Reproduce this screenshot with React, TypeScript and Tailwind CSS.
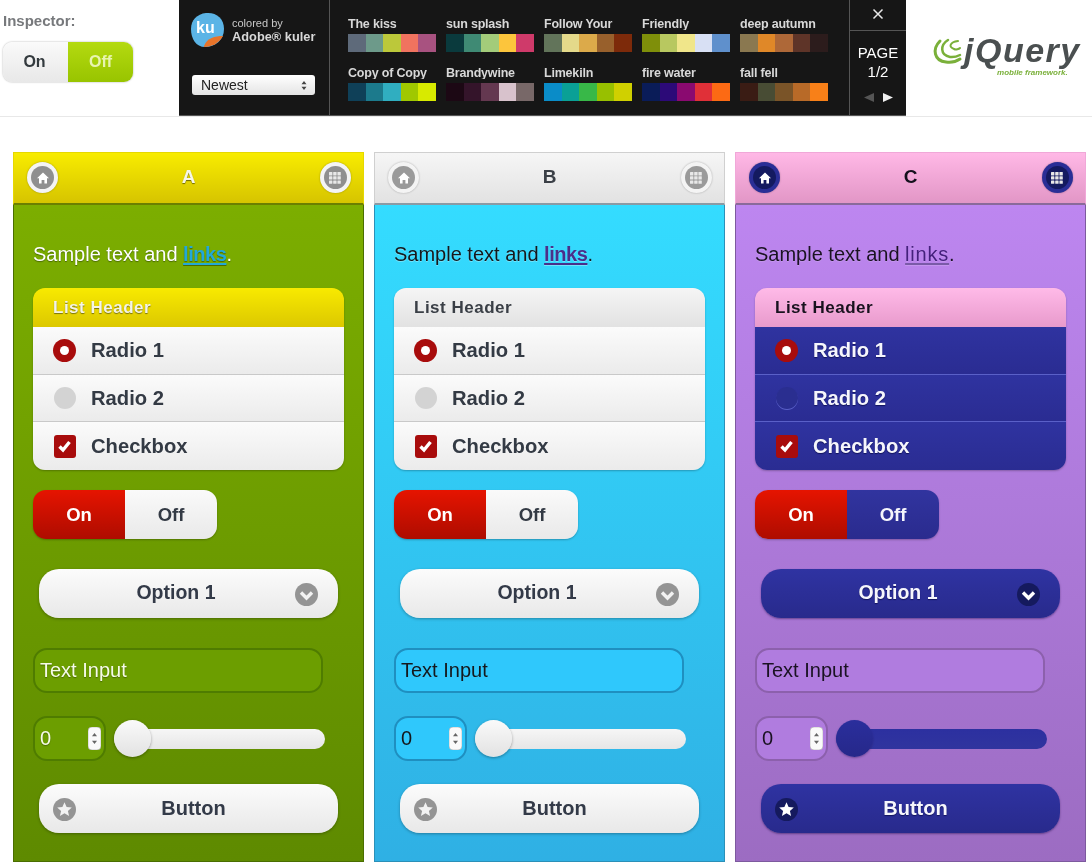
import React from "react";

type Theme = {
  title: string;
  bar: string;
  titleText: string;
  navOuter: string;
  navInner: string;
  body: string;
  sample: string;
  link: string;
  listHead: string;
  listHeadText: string;
  row: string;
  rowText: string;
  rowLine: string;
  radioOff: string;
  off: string;
  offText: string;
  pill: string;
  pillText: string;
  iconBg: string;
  iconInk: string;
  field: string;
  fieldText: string;
  track: string;
  thumb: string;
};

const themes: Theme[] = [
  {
    title: "A",
    bar: "bg-gradient-to-b from-[#f8ec00] to-[#d6c400] border-[#e6d800] border-b-[#6b7f00]",
    titleText: "text-[#f7f7e8] [text-shadow:0_1px_1px_#6e6a00]",
    navOuter: "bg-[#f4f4f4]",
    navInner: "bg-[#8f8f8f]",
    body: "bg-gradient-to-b from-[#7cae00] to-[#5e8a00] border-[#4a6e00]",
    sample: "text-white [text-shadow:0_1px_1px_#4a6a00]",
    link: "font-bold tracking-[-0.45px] text-[#22a8d8] decoration-[#22a8d8]",
    listHead: "bg-gradient-to-b from-[#f8ea00] to-[#dcc800]",
    listHeadText: "text-[#f4f4e6] [text-shadow:0_1px_1px_#77700a]",
    row: "bg-gradient-to-b from-[#fbfbfb] to-[#ebebeb]",
    rowText: "text-[#333a44]",
    rowLine: "border-[#c9c9c9]",
    radioOff: "bg-[#d3d3d3]",
    off: "bg-gradient-to-b from-[#fafafa] to-[#e9e9e9]",
    offText: "text-[#333a44]",
    pill: "bg-gradient-to-b from-[#fcfcfc] to-[#e8e8e8] shadow-[0_1px_3px_rgba(0,0,0,0.3)]",
    pillText: "text-[#333a48]",
    iconBg: "#949494",
    iconInk: "#f2f2f2",
    field: "bg-[#6c9e00] border-[#4f7c00]",
    fieldText: "text-[#f6fbe8] [text-shadow:0_1px_1px_#4a6a00]",
    track: "bg-gradient-to-b from-[#f6f6f6] to-[#e6e6e6]",
    thumb: "bg-gradient-to-b from-[#fafafa] to-[#e2e2e2] shadow-[0_1px_3px_rgba(0,0,0,0.35)]",
  },
  {
    title: "B",
    bar: "bg-gradient-to-b from-[#f6f6f6] to-[#e2e2e2] border-[#d0d0d0] border-b-[#8a9aa4]",
    titleText: "text-[#3a3f46]",
    navOuter: "bg-[#f4f4f4]",
    navInner: "bg-[#9a9a9a]",
    body: "bg-gradient-to-b from-[#34dcff] to-[#2fb0e4] border-[#2b90b8]",
    sample: "text-[#15181c] [text-shadow:0_1px_0_rgba(255,255,255,0.3)]",
    link: "font-bold tracking-[-0.45px] text-[#4a2f8a] decoration-[#4a2f8a]",
    listHead: "bg-gradient-to-b from-[#f5f5f5] to-[#e2e2e2]",
    listHeadText: "text-[#3a3f46]",
    row: "bg-gradient-to-b from-[#fbfbfb] to-[#ebebeb]",
    rowText: "text-[#333a44]",
    rowLine: "border-[#c9c9c9]",
    radioOff: "bg-[#d3d3d3]",
    off: "bg-gradient-to-b from-[#fafafa] to-[#e9e9e9]",
    offText: "text-[#333a44]",
    pill: "bg-gradient-to-b from-[#fcfcfc] to-[#e8e8e8] shadow-[0_1px_3px_rgba(0,0,0,0.3)]",
    pillText: "text-[#333a48]",
    iconBg: "#949494",
    iconInk: "#f2f2f2",
    field: "bg-[#2fc8fc] border-[#1f8fc0]",
    fieldText: "text-[#15181c]",
    track: "bg-gradient-to-b from-[#f6f6f6] to-[#e6e6e6]",
    thumb: "bg-gradient-to-b from-[#fafafa] to-[#e2e2e2] shadow-[0_1px_3px_rgba(0,0,0,0.35)]",
  },
  {
    title: "C",
    bar: "bg-gradient-to-b from-[#ffb8e6] to-[#e296c6] border-[#f0a8d8] border-b-[#8a6a9a]",
    titleText: "text-[#14101c]",
    navOuter: "bg-[#2a2e96]",
    navInner: "bg-[#141a60]",
    body: "bg-gradient-to-b from-[#bd86f0] to-[#9c6cc2] border-[#7d5a9e]",
    sample: "text-[#1a1222] [text-shadow:0_1px_0_rgba(255,255,255,0.15)]",
    link: "tracking-[0.8px] text-[#44207c] decoration-[#7a5aa8]",
    listHead: "bg-gradient-to-b from-[#ffbae8] to-[#e89acc]",
    listHeadText: "text-[#18121e]",
    row: "bg-gradient-to-b from-[#2f33a0] to-[#2a2c92]",
    rowText: "text-[#f6f6fc] [text-shadow:0_1px_1px_#12145c]",
    rowLine: "border-[#5a60c8]",
    radioOff: "bg-[#2a2e90] shadow-[0_1px_0_#5a60c8]",
    off: "bg-gradient-to-b from-[#31349f] to-[#2a2b8e]",
    offText: "text-[#f6f6fc]",
    pill: "bg-gradient-to-b from-[#2f33a2] to-[#282a8c] shadow-[0_1px_2px_rgba(40,20,80,0.5)]",
    pillText: "text-[#f6f6fc] [text-shadow:0_1px_1px_#12145c]",
    iconBg: "#151a5e",
    iconInk: "#ffffff",
    field: "bg-[#b07cdf] border-[#8c60ac]",
    fieldText: "text-[#1a1222]",
    track: "bg-gradient-to-b from-[#2c30a0] to-[#30349e]",
    thumb: "bg-gradient-to-b from-[#2a2e9c] to-[#26288a] shadow-[0_1px_2px_rgba(40,20,80,0.4)]",
  },
];

const palettes: { name: string; colors: string[] }[] = [
  { name: "The kiss", colors: ["#5e6a7a", "#6d9a8a", "#bcc83a", "#f0735f", "#a85280"] },
  { name: "sun splash", colors: ["#0a3a3d", "#3f8a74", "#a3cc7a", "#fcc53c", "#cf3a6a"] },
  { name: "Follow Your", colors: ["#62745a", "#e4d98a", "#dcaa4a", "#98602c", "#7d2a0a"] },
  { name: "Friendly", colors: ["#7f8f0a", "#b8c860", "#f0e68a", "#d8e0f4", "#5f90cc"] },
  { name: "deep autumn", colors: ["#8a7850", "#e08828", "#ae6838", "#5e3428", "#2c1c1c"] },
  { name: "Copy of Copy", colors: ["#0f4058", "#1c7a8c", "#30aec0", "#a0c800", "#d8ea00"] },
  { name: "Brandywine", colors: ["#1c0814", "#34142a", "#643850", "#d8c2cc", "#786868"] },
  { name: "Limekiln", colors: ["#0a8cc8", "#0aa096", "#38b848", "#98c000", "#d0d000"] },
  { name: "fire water", colors: ["#0a1c58", "#2c0a78", "#8a0a70", "#e03038", "#fc6a14"] },
  { name: "fall fell", colors: ["#3a1c14", "#484c34", "#7a5428", "#b86a28", "#f88018"] },
];

const font = "font-['Liberation_Sans',Arial,sans-serif]";

function NavButton({ t, kind }: { t: Theme; kind: "home" | "grid" }) {
  return (
    <div className={`w-[31px] h-[31px] rounded-full flex items-center justify-center shadow-[0_0_2px_rgba(0,0,0,0.3)] ${t.navOuter}`}>
      <div className={`w-[23px] h-[23px] rounded-full flex items-center justify-center ${t.navInner}`}>
        {kind === "home" ? (
          <svg width="14" height="14" viewBox="0 0 14 14">
            <path d="M7 1.5 L13 7.2 H11 V12.5 H8.4 V9 H5.6 V12.5 H3 V7.2 H1 Z" fill="#fff" />
          </svg>
        ) : (
          <svg width="14" height="14" viewBox="0 0 14 14" fill="#e8e8e8">
            {[1, 5.2, 9.4].map((y) =>
              [1, 5.2, 9.4].map((x) => <rect key={`${x}-${y}`} x={x} y={y} width="3.4" height="3.4" rx="0.5" />)
            )}
          </svg>
        )}
      </div>
    </div>
  );
}

function Row({ t, label, kind, last }: { t: Theme; label: string; kind: "on" | "off" | "check"; last?: boolean }) {
  return (
    <div className={`h-[48px] flex items-center pl-[20px] ${t.row} ${last ? "" : `border-b ${t.rowLine}`}`}>
      <div className="w-[23px] h-[23px] flex items-center justify-center mr-[15px]">
        {kind === "on" && (
          <div className="w-[23px] h-[23px] rounded-full bg-[#a80c0c] flex items-center justify-center">
            <div className="w-[9px] h-[9px] rounded-full bg-white" />
          </div>
        )}
        {kind === "off" && <div className={`w-[22px] h-[22px] rounded-full ${t.radioOff}`} />}
        {kind === "check" && (
          <div className="w-[22px] h-[23px] rounded-[3px] bg-[#a80c0c] flex items-center justify-center">
            <svg width="15" height="14" viewBox="0 0 15 14">
              <path d="M2.5 7.5 L6 11 L12.5 3" fill="none" stroke="#fff" strokeWidth="3.4" />
            </svg>
          </div>
        )}
      </div>
      <span className={`text-[20.2px] font-bold ${t.rowText}`}>{label}</span>
    </div>
  );
}

function Panel({ t }: { t: Theme }) {
  return (
    <div className="w-[351px] h-[710px] flex flex-col">
      <div className={`h-[53px] flex items-center justify-between pl-[13px] pr-[12px] pb-[1px] border border-b-2 ${t.bar}`}>
        <NavButton t={t} kind="home" />
        <span className={`text-[19px] font-bold pb-[1px] pr-[1px] ${t.titleText}`}>{t.title}</span>
        <NavButton t={t} kind="grid" />
      </div>
      <div className={`flex-1 flex flex-col border border-t-0 px-[19px] ${t.body}`}>
        <p className={`mt-[35px] h-[28px] leading-[28px] text-[20px] ${t.sample}`}>
          Sample text and <span className={`underline underline-offset-2 ${t.link}`}>links</span>.
        </p>
        <div className="mt-[20px] w-[311px] h-[182px] rounded-[12px] overflow-hidden shadow-[0_1px_2px_rgba(0,0,0,0.25)] flex flex-col">
          <div className={`h-[39px] flex items-center pl-[20px] ${t.listHead}`}>
            <span className={`text-[17px] font-bold tracking-[0.5px] ${t.listHeadText}`}>List Header</span>
          </div>
          <Row t={t} label="Radio 1" kind="on" />
          <Row t={t} label="Radio 2" kind="off" />
          <Row t={t} label="Checkbox" kind="check" last />
        </div>
        <div className="mt-[20px] w-[184px] h-[49px] rounded-[13px] overflow-hidden flex shadow-[0_1px_2px_rgba(0,0,0,0.25)]">
          <div className="w-[92px] flex items-center justify-center bg-gradient-to-b from-[#e61400] to-[#ae0c00] text-white text-[18.5px] font-bold">
            On
          </div>
          <div className={`flex-1 flex items-center justify-center text-[18.5px] font-bold ${t.off} ${t.offText}`}>Off</div>
        </div>
        <div className={`mt-[30px] ml-[6px] w-[299px] h-[49px] rounded-[20px] relative flex items-center justify-center pr-[25px] pb-[1px] ${t.pill}`}>
          <span className={`text-[19.5px] font-bold ${t.pillText}`}>Option 1</span>
          <svg className="absolute right-[20px] top-[14px]" width="23" height="23" viewBox="0 0 23 23">
            <circle cx="11.5" cy="11.5" r="11.5" fill={t.iconBg} />
            <path d="M6 9.5 L11.5 15 L17 9.5" fill="none" stroke={t.iconInk} strokeWidth="3.4" />
          </svg>
        </div>
        <div className={`mt-[30px] w-[290px] h-[45px] rounded-[14px] border-2 flex items-center pl-[5px] pb-[2px] ${t.field}`}>
          <span className={`text-[20px] ${t.fieldText}`}>Text Input</span>
        </div>
        <div className="mt-[23px] h-[45px] flex items-center">
          <div className={`w-[73px] h-[45px] rounded-[14px] border-2 flex items-center justify-between pl-[5px] pr-[3px] ${t.field}`}>
            <span className={`text-[20px] pb-[2px] ${t.fieldText}`}>0</span>
            <svg width="13" height="23" viewBox="0 0 13 23">
              <rect width="13" height="23" rx="4" fill="#fafafa" stroke="#999" strokeWidth="0.5" />
              <path d="M6.5 6 L9 9.2 H4 Z" fill="#666" />
              <path d="M6.5 17 L9 13.8 H4 Z" fill="#666" />
            </svg>
          </div>
          <div className="relative ml-[8px] w-[211px] h-[20px]">
            <div className={`h-[20px] rounded-[10px] ${t.track}`} />
            <div className={`absolute left-0 top-[-9px] w-[37px] h-[37px] rounded-full ${t.thumb}`} />
          </div>
        </div>
        <div className={`mt-[23px] ml-[6px] w-[299px] h-[49px] rounded-[20px] relative flex items-center justify-center pl-[10px] pb-[2px] ${t.pill}`}>
          <span className={`text-[20px] font-bold ${t.pillText}`}>Button</span>
          <svg className="absolute left-[14px] top-[14px]" width="23" height="23" viewBox="0 0 23 23">
            <circle cx="11.5" cy="11.5" r="11.5" fill={t.iconBg} />
            <path d="M11.5 4.2 L13.6 9 L18.8 9.5 L14.9 12.9 L16.1 18 L11.5 15.3 L6.9 18 L8.1 12.9 L4.2 9.5 L9.4 9 Z" fill={t.iconInk} />
          </svg>
        </div>
      </div>
    </div>
  );
}

function Kuler() {
  return (
    <div className="w-[727px] h-[116px] bg-[#161616] flex text-white border-b border-[#555]">
      <div className="w-[151px] pl-[12px] border-r border-[#555] flex flex-col">
        <div className="mt-[12px] flex items-center">
          <svg width="34" height="36" viewBox="0 0 34 36">
            <path d="M15 1 C25 0 33 6 33 17 C33 28 24 35 14 35 C5 35 0 27 0 17 C0 8 6 2 15 1 Z" fill="#5bb4e6" />
            <path d="M13 34 C16 26 24 24 32 24 C28 31 21 35 13 35 Z" fill="#e8742a" />
            <text x="5" y="21" fontSize="16" fontWeight="700" fill="#fff" fontFamily="Liberation Sans, sans-serif">ku</text>
          </svg>
          <div className="ml-[7px] flex flex-col">
            <span className="text-[11px] leading-[12px] text-[#c8c8c8]">colored by</span>
            <span className="text-[12.8px] leading-[15px] font-bold text-[#d8d8d8]">Adobe® kuler</span>
          </div>
        </div>
        <div className="mt-[27px] ml-[1px] w-[123px] h-[20px] rounded-[3px] bg-gradient-to-b from-[#ffffff] to-[#e4e4e4] flex items-center justify-between pl-[9px] pr-[8px]">
          <span className="text-[14px] text-[#222]">Newest</span>
          <svg width="6" height="11" viewBox="0 0 6 11">
            <path d="M3 1 L5.5 4.2 H0.5 Z M3 10 L5.5 6.8 H0.5 Z" fill="#444" />
          </svg>
        </div>
      </div>
      <div className="w-[519px] pl-[18px] pt-[17px] grid grid-cols-[repeat(5,98px)] grid-rows-[49px_49px] content-start">
        {palettes.map((p) => (
          <div key={p.name} className="flex flex-col">
            <div className="h-[13px] overflow-hidden text-[12.5px] leading-[15px] font-bold tracking-[-0.2px] text-[#d8d8d8]">{p.name}</div>
            <div className="mt-[4px] w-[88px] h-[18px] flex">
              {p.colors.map((c, i) => (
                <div key={i} className="flex-1" style={{ background: c }} />
              ))}
            </div>
          </div>
        ))}
      </div>
      <div className="flex-1 border-l border-[#555] flex flex-col items-center">
        <div className="w-full h-[31px] border-b border-[#555] flex items-center justify-center pb-[3px]">
          <svg width="12" height="12" viewBox="0 0 12 12">
            <path d="M1.5 1.5 L10.5 10.5 M10.5 1.5 L1.5 10.5" stroke="#e8e8e8" strokeWidth="1.5" />
          </svg>
        </div>
        <div className="mt-[12px] text-[15px] leading-[19px] text-center text-white">
          PAGE
          <br />
          1/2
        </div>
        <div className="mt-[12px] flex items-center gap-[9px]">
          <svg width="10" height="9" viewBox="0 0 10 9"><path d="M0 4.5 L10 0 V9 Z" fill="#555" /></svg>
          <svg width="10" height="9" viewBox="0 0 10 9"><path d="M10 4.5 L0 0 V9 Z" fill="#f0f0f0" /></svg>
        </div>
      </div>
    </div>
  );
}

function JQueryLogo() {
  return (
    <div className="flex-1 h-[116px] flex items-start pt-[35px] pl-[26px]">
      <svg width="32" height="30" viewBox="0 0 32 30" className="mt-[2px] shrink-0">
        <g fill="none" stroke="#7ab03a" strokeLinecap="round">
          <path d="M8 4 C0 12 2 24 14 25 C20 26 25 24 28 22" strokeWidth="3" />
          <path d="M16 3 C8 8 8 18 18 20 C22 20.5 26 19 28 18" strokeWidth="2.5" />
          <path d="M26 4 C18 5 16 10 22 12 C24 13 27 12 28 11" strokeWidth="2" />
        </g>
      </svg>
      <div className="flex flex-col">
        <span className="h-[30px] text-[34px] leading-[30px] font-bold italic text-[#4a4f50] tracking-[1.5px]">jQuery</span>
        <span className="text-[8px] leading-[8px] font-bold italic text-[#7ab03a] self-end mr-[13px] mt-[4px]">mobile framework.</span>
      </div>
    </div>
  );
}

export default function App() {
  return (
    <div className={`w-[1092px] h-[866px] bg-white overflow-hidden blur-[0.4px] ${font}`}>
      <div className="h-[117px] flex border-b border-[#e8e8e8]">
        <div className="w-[179px] pl-[3px] pt-[12px]">
          <div className="text-[15px] leading-[17px] font-bold text-[#77797c]">Inspector:</div>
          <div className="mt-[13px] w-[130px] h-[40px] rounded-[9px] overflow-hidden flex shadow-[0_0_2px_rgba(0,0,0,0.35)]">
            <div className="w-[65px] flex items-center justify-center bg-gradient-to-b from-[#fafafa] to-[#e8e8e8] text-[16px] font-bold text-[#333a3e] pr-[2px]">On</div>
            <div className="flex-1 flex items-center justify-center bg-gradient-to-b from-[#b4da10] to-[#98c400] text-[16px] font-bold text-[#e8f4b0]">Off</div>
          </div>
        </div>
        <Kuler />
        <JQueryLogo />
      </div>
      <div className="mt-[35px] pl-[13px] flex gap-[10px]">
        {themes.map((t) => (
          <Panel key={t.title} t={t} />
        ))}
      </div>
    </div>
  );
}
